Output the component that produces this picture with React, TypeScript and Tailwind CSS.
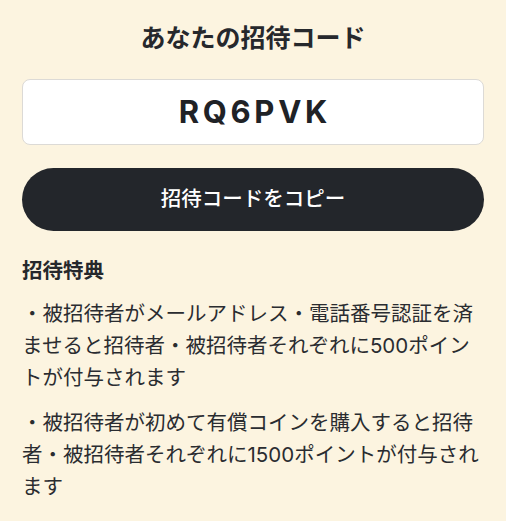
const jp = { fontFamily: 'Inter, "Noto Sans CJK JP", "Noto Sans", sans-serif' };

export default function App() {
  const code = 'RQ6PVK';
  const benefits = [
    '・被招待者がメールアドレス・電話番号認証を済ませると招待者・被招待者それぞれに500ポイントが付与されます',
    '・被招待者が初めて有償コインを購入すると招待者・被招待者それぞれに1500ポイントが付与されます',
  ];

  return (
    <div
      className="min-h-screen bg-[#fcf4e0] px-[22px] pt-[20px] pb-6 text-[#26282c]"
      style={jp}
    >
      <h1 className="text-center text-[25px] leading-[36px] font-semibold">あなたの招待コード</h1>

      <div className="mt-[23px] flex h-[66px] items-center justify-center rounded-lg border border-[#dcdad6] bg-white">
        <span className="pl-[0.12em] text-[31px] font-bold tracking-[0.12em] text-[#202226]">
          {code}
        </span>
      </div>

      <button className="mt-[23px] flex h-[63px] w-full items-center justify-center rounded-full bg-[#23262b] text-[20.5px] font-medium text-white">
        招待コードをコピー
      </button>

      <h2 className="mt-[25px] text-[20.5px] leading-[30px] font-bold">招待特典</h2>

      <div className="mt-[12px] flex flex-col gap-[13px]">
        {benefits.map((text) => (
          <p key={text} className="text-[20.5px] leading-[32px] text-[#2a2c30]">
            {text}
          </p>
        ))}
      </div>
    </div>
  );
}
